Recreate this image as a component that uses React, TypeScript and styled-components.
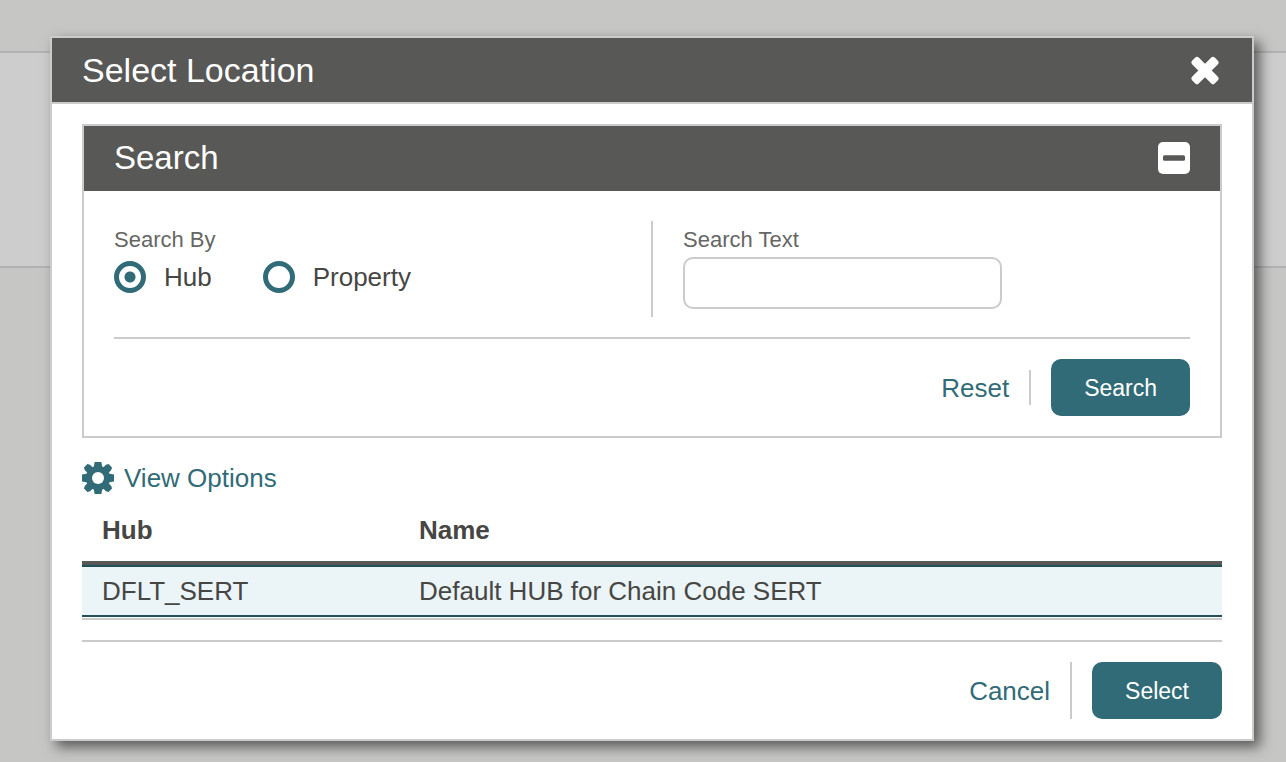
import React from "react";
import styled, { createGlobalStyle } from "styled-components";

const ink = "#464644";
const teal = "#316b77";
const charcoal = "#585856";
const rule = "#cbcbcb";

const GlobalStyle = createGlobalStyle`
  * { box-sizing: border-box; }
  body {
    margin: 0;
    min-height: 100vh;
    background: #c6c6c4;
    color: ${ink};
    font: 26px/32px "Liberation Sans", Arial, sans-serif;
  }
`;

const Backdrop = styled.div`
  padding-top: 51px;
`;

const BackdropBand = styled.div`
  height: 217px;
  border: solid #b2b2b2;
  border-width: 2px 0;
  background: #cdcdcd;
`;

const Overlay = styled.div`
  position: absolute;
  inset: 0 0 auto;
  padding: 36px 32px 20px 50px;
`;

const Dialog = styled.div`
  border: 2px solid ${rule};
  background: #fff;
  box-shadow: 6px 6px 12px rgba(0, 0, 0, 0.55);
`;

const TitleBar = styled.header<{ $ruled?: boolean }>`
  display: flex;
  align-items: center;
  justify-content: space-between;
  min-height: ${(p) => (p.$ruled ? 66 : 65)}px;
  padding: ${(p) => (p.$ruled ? "0 30px" : "0 30px 1px")};
  border-bottom: ${(p) => (p.$ruled ? `2px solid ${rule}` : "none")};
  background: ${charcoal};
  color: #fff;
`;

const Title = styled.h1<{ $size?: number }>`
  margin: 0;
  font-size: ${(p) => p.$size ?? 34}px;
  line-height: 40px;
  font-weight: 400;
`;

const IconButton = styled.button`
  display: flex;
  padding: 0;
  border: 0;
  background: none;
  color: inherit;
  cursor: pointer;
`;

const Content = styled.div`
  padding: 20px 30px;
`;

const Panel = styled.form`
  border: 2px solid ${rule};
`;

const PanelBody = styled.div`
  padding: 30px 30px 20px;
`;

const Fields = styled.div`
  display: grid;
  grid-template-columns: 1fr 2px 1fr;
  min-height: 96px;
`;

const Divider = styled.span<{ $height?: number }>`
  width: 2px;
  height: ${(p) => (p.$height ? `${p.$height}px` : "auto")};
  background: ${rule};
`;

const RadioGroup = styled.fieldset`
  margin: 0;
  padding: 4px 0 0;
  border: 0;
`;

const TextField = styled.div`
  display: flex;
  flex-direction: column;
  align-items: flex-start;
  padding: 4px 0 0 30px;
`;

const Caption = styled.span`
  display: block;
  color: #666664;
  font-size: 22px;
  line-height: 30px;
`;

const Choices = styled.div`
  display: flex;
  gap: 51px;
  padding-top: 6px;
`;

const Choice = styled.label`
  display: flex;
  align-items: center;
  gap: 18px;
`;

const Radio = styled.input`
  appearance: none;
  width: 32px;
  height: 32px;
  margin: 0;
  border: 5px solid ${teal};
  border-radius: 50%;
  background: #fff;

  &:checked {
    background: radial-gradient(circle, ${teal} 5px, #fff 6px);
  }
`;

const TextInput = styled.input`
  width: 319px;
  max-width: 100%;
  height: 52px;
  margin-top: 2px;
  padding: 0 16px;
  border: 2px solid ${rule};
  border-radius: 10px;
  background: #fff;
  color: ${ink};
  font: inherit;
`;

const Actions = styled.div`
  display: flex;
  align-items: center;
  justify-content: flex-end;
  gap: 20px;
  margin-top: 20px;
  padding-top: 20px;
  border-top: 2px solid ${rule};
`;

const TextLink = styled.a`
  display: inline-flex;
  align-items: center;
  gap: 10px;
  color: ${teal};
  text-decoration: none;
`;

const PrimaryButton = styled.button`
  height: 57px;
  padding: 0 33px;
  border: 0;
  border-radius: 10px;
  background: ${teal};
  color: #fff;
  font: inherit;
  font-size: 23px;
  cursor: pointer;
`;

const Toolbar = styled.div`
  display: flex;
  padding: 24px 0 5px;
`;

const Results = styled.div`
  padding-bottom: 1px;
  border-bottom: 2px solid ${rule};
`;

const Table = styled.table`
  width: 100%;
  border-collapse: separate;
  border-spacing: 0;
  table-layout: fixed;
  text-align: left;
`;

const HeadCell = styled.th<{ $width?: string }>`
  width: ${(p) => p.$width ?? "auto"};
  height: 66px;
  padding: 0 20px;
  border-bottom: 4px solid ${charcoal};
  font-weight: 700;
`;

const Cell = styled.td`
  height: 52px;
  padding: 0 20px;
  border: solid #24505a;
  border-width: 2px 0;
  background: #ebf4f6;
`;

const CloseIcon = () => (
  <svg width="34" height="34" viewBox="0 0 34 34" aria-hidden="true">
    <g fill="currentColor" transform="rotate(45 17 17.5)">
      <rect x="1" y="12.8" width="32" height="9.4" rx="2.4" />
      <rect x="12.3" y="1.5" width="9.4" height="32" rx="2.4" />
    </g>
  </svg>
);

const CollapseIcon = () => (
  <svg width="32" height="32" viewBox="0 0 32 32" aria-hidden="true">
    <rect width="32" height="32" rx="5" fill="currentColor" />
    <rect x="5" y="13.2" width="22" height="5.6" rx="1.5" fill={charcoal} />
  </svg>
);

const GearIcon = () => (
  <svg width="32" height="32" viewBox="0 0 32 32" aria-hidden="true">
    <g fill="currentColor">
      {[0, 90].map((angle) => (
        <path
          key={angle}
          transform={`rotate(${angle} 16 16)`}
          d="M12.6 0H19.4L20.4 6V26L19.4 32H12.6L11.6 26V6Z"
        />
      ))}
      {[45, 135].map((angle) => (
        <path
          key={angle}
          transform={`rotate(${angle} 16 16)`}
          d="M13.6 -1.4H18.4L19.8 1V31L18.4 33.4H13.6L12.2 31V1Z"
        />
      ))}
      <circle cx="16" cy="16" r="12.2" />
    </g>
    <circle cx="16" cy="16" r="6" fill="#fff" />
  </svg>
);

export default function App() {
  return (
    <>
      <GlobalStyle />
      <Backdrop>
        <BackdropBand />
      </Backdrop>
      <Overlay>
        <Dialog role="dialog" aria-labelledby="dialog-title">
          <TitleBar $ruled>
            <Title id="dialog-title">Select Location</Title>
            <IconButton type="button" aria-label="Close">
              <CloseIcon />
            </IconButton>
          </TitleBar>
          <Content>
            <Panel onSubmit={(e) => e.preventDefault()}>
              <TitleBar>
                <Title as="h2" $size={33}>Search</Title>
                <IconButton type="button" aria-label="Collapse">
                  <CollapseIcon />
                </IconButton>
              </TitleBar>
              <PanelBody>
                <Fields>
                  <RadioGroup aria-labelledby="search-by">
                    <Caption id="search-by">Search By</Caption>
                    <Choices>
                      <Choice>
                        <Radio type="radio" name="searchBy" defaultChecked />
                        Hub
                      </Choice>
                      <Choice>
                        <Radio type="radio" name="searchBy" />
                        Property
                      </Choice>
                    </Choices>
                  </RadioGroup>
                  <Divider />
                  <TextField>
                    <Caption as="label" htmlFor="search-text">
                      Search Text
                    </Caption>
                    <TextInput id="search-text" type="text" />
                  </TextField>
                </Fields>
                <Actions>
                  <TextLink href="#reset">Reset</TextLink>
                  <Divider $height={35} />
                  <PrimaryButton type="submit">Search</PrimaryButton>
                </Actions>
              </PanelBody>
            </Panel>
            <Toolbar>
              <TextLink href="#view-options">
                <GearIcon />
                View Options
              </TextLink>
            </Toolbar>
            <Results>
              <Table>
                <thead>
                  <tr>
                    <HeadCell scope="col" $width="317px">Hub</HeadCell>
                    <HeadCell scope="col">Name</HeadCell>
                  </tr>
                </thead>
                <tbody>
                  <tr>
                    <Cell>DFLT_SERT</Cell>
                    <Cell>Default HUB for Chain Code SERT</Cell>
                  </tr>
                </tbody>
              </Table>
            </Results>
            <Actions>
              <TextLink href="#cancel">Cancel</TextLink>
              <Divider $height={57} />
              <PrimaryButton type="button">Select</PrimaryButton>
            </Actions>
          </Content>
        </Dialog>
      </Overlay>
    </>
  );
}
